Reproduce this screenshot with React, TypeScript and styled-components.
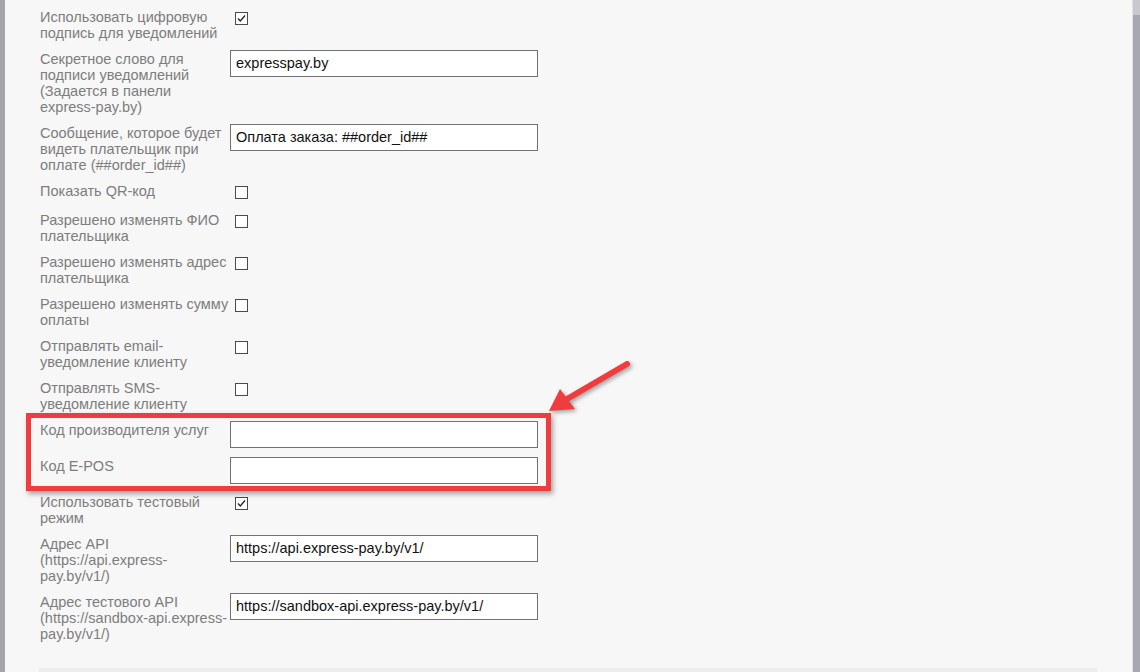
import React from 'react';
import styled, { createGlobalStyle } from 'styled-components';

const GlobalStyle = createGlobalStyle`
  html, body {
    margin: 0;
    padding: 0;
    background: #f7f7f7;
  }
  body {
    font-family: "Liberation Sans", Arial, sans-serif;
  }
`;

type RowData = {
  label: string;
  kind: 'check' | 'text';
  checked?: boolean;
  value?: string;
};

const Page = styled.div`
  display: flex;
  width: 1140px;
  height: 672px;
  overflow: hidden;
  background: #f7f7f7;
`;

const EdgeBar = styled.div<{ $w: number }>`
  flex: 0 0 ${p => p.$w}px;
  background: #a4a4ab;
`;

const RightBar = styled(EdgeBar)`
  background: linear-gradient(to bottom, #c8c8ce 0, #c8c8ce 15px, #a8a8b0 15px);
  border-left: 1px solid #e2e2e4;
`;

const Main = styled.div`
  flex: 1;
  padding: 4px 0 0 35px;
  display: flex;
  flex-direction: column;
`;

const Row = styled.div`
  display: grid;
  grid-template-columns: 190px 1fr;
  align-items: start;
  padding: 5px 0;
`;

const Label = styled.div`
  font-size: 14.5px;
  line-height: 16px;
  color: #7d7d7d;
`;

const Box = styled.span`
  display: block;
  width: 11px;
  height: 11px;
  margin: 3px 0 3px 5px;
  border: 1px solid #4a4a4a;
  background: #fff;
  svg {
    display: block;
  }
`;

const Field = styled.div`
  width: 301px;
  height: 25px;
  margin-top: -1px;
  padding-left: 5px;
  border: 1px solid #727272;
  background: #fff;
  font-size: 14.5px;
  line-height: 25px;
  color: #111;
  white-space: nowrap;
`;

const Highlight = styled.div`
  position: relative;
  &::before {
    content: '';
    position: absolute;
    left: -14px;
    top: -4px;
    width: 515px;
    bottom: -2px;
    border: 5px solid #f03c3c;
    box-shadow: 2px 3px 5px rgba(0, 0, 0, 0.35);
    pointer-events: none;
  }
`;

const Arrow = styled.svg`
  position: absolute;
  left: 500px;
  top: -62px;
  overflow: visible;
  filter: drop-shadow(2px 2px 2px rgba(0, 0, 0, 0.35));
`;

const Footer = styled.div`
  margin: 21px 0 0 -1px;
  width: 1058px;
  height: 12px;
  background: #ececec;
`;

const Check = ({ checked }: { checked?: boolean }) => (
  <Box>
    {checked && (
      <svg width="11" height="11" viewBox="0 0 11 11">
        <polyline points="2,5.5 4.3,8 9,2.5" fill="none" stroke="#222" strokeWidth="1.3" />
      </svg>
    )}
  </Box>
);

const SettingRow = ({ row }: { row: RowData }) => (
  <Row>
    <Label>{row.label}</Label>
    {row.kind === 'check' ? <Check checked={row.checked} /> : <Field>{row.value}</Field>}
  </Row>
);

const topRows: RowData[] = [
  { label: 'Использовать цифровую подпись для уведомлений', kind: 'check', checked: true },
  { label: 'Секретное слово для подписи уведомлений (Задается в панели express-pay.by)', kind: 'text', value: 'expresspay.by' },
  { label: 'Сообщение, которое будет видеть плательщик при оплате (##order_id##)', kind: 'text', value: 'Оплата заказа: ##order_id##' },
  { label: 'Показать QR-код', kind: 'check' },
  { label: 'Разрешено изменять ФИО плательщика', kind: 'check' },
  { label: 'Разрешено изменять адрес плательщика', kind: 'check' },
  { label: 'Разрешено изменять сумму оплаты', kind: 'check' },
  { label: 'Отправлять email-уведомление клиенту', kind: 'check' },
  { label: 'Отправлять SMS-уведомление клиенту', kind: 'check' },
];

const markedRows: RowData[] = [
  { label: 'Код производителя услуг', kind: 'text', value: '' },
  { label: 'Код E-POS', kind: 'text', value: '' },
];

const bottomRows: RowData[] = [
  { label: 'Использовать тестовый режим', kind: 'check', checked: true },
  { label: 'Адрес API (https://api.express-pay.by/v1/)', kind: 'text', value: 'https://api.express-pay.by/v1/' },
  { label: 'Адрес тестового API (https://sandbox-api.express-pay.by/v1/)', kind: 'text', value: 'https://sandbox-api.express-pay.by/v1/' },
];

export default function App() {
  return (
    <>
      <GlobalStyle />
      <Page>
        <EdgeBar $w={5} />
        <Main>
          {topRows.map((r, i) => <SettingRow key={i} row={r} />)}
          <Highlight>
            {markedRows.map((r, i) => <SettingRow key={i} row={r} />)}
            {/* annotation arrow pointing at the box corner */}
            <Arrow width="100" height="70" viewBox="0 0 100 70">
              <line x1="87" y1="9" x2="27" y2="44" stroke="#f03c3c" strokeWidth="6" strokeLinecap="round" />
              <polygon points="9,56 20,34 35,54" fill="#f03c3c" />
            </Arrow>
          </Highlight>
          {bottomRows.map((r, i) => <SettingRow key={i} row={r} />)}
          <Footer />
        </Main>
        <RightBar $w={7} />
      </Page>
    </>
  );
}
